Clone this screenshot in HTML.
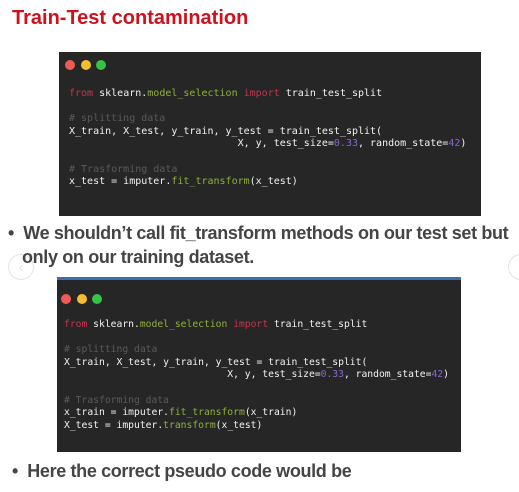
<!DOCTYPE html>
<html><head><style>
body{margin:0;width:519px;height:492px;background:#fff;position:relative;overflow:hidden;font-family:"Liberation Sans",sans-serif}
.t{position:absolute;left:12px;top:7px;color:#d0101c;font-weight:bold;font-size:20px}
.box{position:absolute;background:#262626}
.dot{position:absolute;width:10px;height:10px;border-radius:50%}
pre{position:absolute;margin:0;font-family:"DejaVu Sans Mono",monospace;font-size:10px;line-height:12.6px;color:#f2f2f2}
.k{color:#c2364f}.g{color:#8fb13a}.c{color:#5a5a5a}.n{color:#8866cc}
.b{position:absolute;font-weight:bold;color:#444;font-size:18px;line-height:24px;white-space:nowrap;letter-spacing:-0.35px}
.circ{position:absolute;width:24px;height:24px;border-radius:50%;border:1px solid #e4e4e4;color:#ddd;font-size:14px;text-align:center;line-height:24px}
</style></head><body>
<div class="t">Train-Test contamination</div>
<div class="box" style="left:59px;top:52px;width:422px;height:164px">
<div class="dot" style="left:6px;top:8px;background:#ee5b56"></div>
<div class="dot" style="left:22px;top:8px;background:#f5bd30"></div>
<div class="dot" style="left:37px;top:8px;background:#35c443"></div>
<pre style="left:10px;top:36px"><span class="k">from</span> sklearn.<span class="g">model_selection</span> <span class="k">import</span> train_test_split

<span class="c"># splitting data</span>
X_train, X_test, y_train, y_test = train_test_split(
                            X, y, test_size=<span class="n">0.33</span>, random_state=<span class="n">42</span>)

<span class="c"># Trasforming data</span>
x_test = imputer.<span class="g">fit_transform</span>(x_test)</pre>
</div>
<div class="circ" style="left:8px;top:254px">‹</div>
<div class="circ" style="left:508px;top:254px">›</div>
<div class="b" style="left:8px;top:221px">•&nbsp; We shouldn’t call fit_transform methods on our test set but</div>
<div class="b" style="left:22px;top:245px">only on our training dataset.</div>
<div class="box" style="left:57px;top:277px;width:404px;height:175px;border-top:3px solid #3b6fb0;box-sizing:border-box">
<div class="dot" style="left:4px;top:14px;background:#ee5b56"></div>
<div class="dot" style="left:20px;top:14px;background:#f5bd30"></div>
<div class="dot" style="left:35px;top:14px;background:#35c443"></div>
<pre style="left:7px;top:39px;font-size:9.7px"><span class="k">from</span> sklearn.<span class="g">model_selection</span> <span class="k">import</span> train_test_split

<span class="c"># splitting data</span>
X_train, X_test, y_train, y_test = train_test_split(
                            X, y, test_size=<span class="n">0.33</span>, random_state=<span class="n">42</span>)

<span class="c"># Trasforming data</span>
x_train = imputer.<span class="g">fit_transform</span>(x_train)
X_test = imputer.<span class="g">transform</span>(x_test)</pre>
</div>
<div class="b" style="left:12px;top:459px">•&nbsp; Here the correct pseudo code would be</div>
</body></html>
